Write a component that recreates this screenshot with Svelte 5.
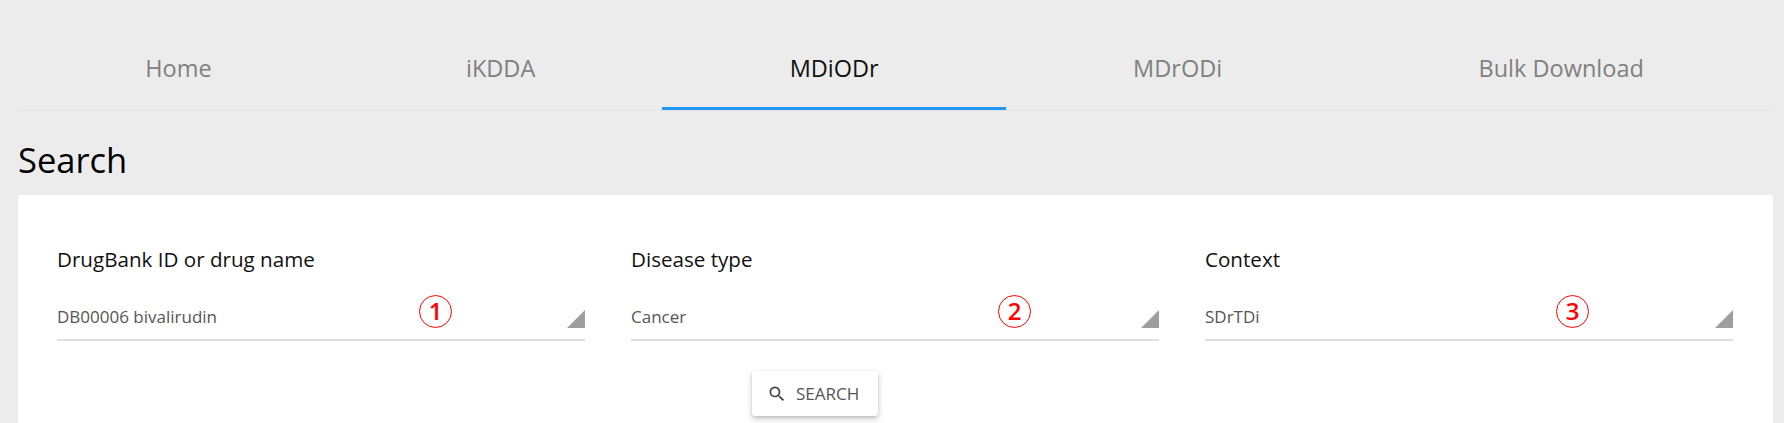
<script>
  const tabs = ['Home', 'iKDDA', 'MDiODr', 'MDrODi', 'Bulk Download'];
  const fields = [
    { label: 'DrugBank ID or drug name', value: 'DB00006 bivalirudin', mark: 1, left: 362 },
    { label: 'Disease type', value: 'Cancer', mark: 2, left: 367 },
    { label: 'Context', value: 'SDrTDi', mark: 3, left: 351 }
  ];
</script>

<div class="page">
  <nav class="tabs">
    {#each tabs as tab, i}
      <div class="tab" class:active={i === 2}>{tab}</div>
    {/each}
  </nav>

  <h1 class="title">Search</h1>

  <section class="card">
    <div class="fields">
      {#each fields as f}
        <div class="field">
          <div class="field__label">{f.label}</div>
          <div class="field__input">
            <span class="field__value">{f.value}</span>
            <span class="field__corner"></span>
            <span class="mark" style="left: {f.left}px">{f.mark}</span>
          </div>
        </div>
      {/each}
    </div>
    <div class="actions">
      <button class="btn">
        <svg width="20" height="20" viewBox="0 0 24 24" aria-hidden="true">
          <path fill="#444" d="M15.5 14h-.79l-.28-.27A6.47 6.47 0 0 0 16 9.5 6.5 6.5 0 1 0 9.5 16c1.61 0 3.09-.59 4.23-1.57l.27.28v.79l5 4.99L20.49 19l-4.99-5zm-6 0C7.01 14 5 11.99 5 9.5S7.01 5 9.5 5 14 7.01 14 9.5 11.99 14 9.5 14z"/>
        </svg>
        SEARCH
      </button>
    </div>
  </section>
</div>

<style>
  :global(body) {
    background: #ececec;
    font-family: "Open Sans", "Noto Sans", sans-serif;
  }

  .page {
    height: 423px;
    box-sizing: border-box;
    padding: 0 11px 0 18px;
    overflow: hidden;
  }

  .tabs {
    display: flex;
    padding-top: 28px;
    border-bottom: 1px solid #e6e6e6;
    height: 82px;
  }

  .tab {
    flex: 1 1 auto;
    display: flex;
    align-items: center;
    justify-content: center;
    height: 82px;
    box-sizing: border-box;
    font-size: 23.5px;
    color: #808080;
    border-bottom: 3px solid transparent;
  }

  .tab:last-child {
    padding: 0 2px;
  }

  .tab.active {
    color: #111;
    border-bottom-color: #2196f3;
  }

  .title {
    margin: 0;
    padding-top: 26px;
    height: 84px;
    box-sizing: border-box;
    font-size: 34.5px;
    font-weight: 400;
    line-height: 46px;
    color: #000;
  }

  .card {
    background: #fff;
    height: 260px;
    padding: 0 40px 0 39px;
  }

  .fields {
    display: grid;
    grid-template-columns: repeat(3, 1fr);
    column-gap: 46px;
    padding-top: 50px;
  }

  .field__label {
    font-size: 20.6px;
    line-height: 28px;
    color: #111;
  }

  .field__input {
    position: relative;
    height: 62px;
    margin-top: 6px;
    box-sizing: border-box;
    border-bottom: 2px solid #e0e0e0;
  }

  .field__value {
    position: absolute;
    left: 0;
    top: 26px;
    font-size: 17px;
    line-height: 24px;
    color: #555;
  }

  .field__corner {
    position: absolute;
    right: 0;
    bottom: 11px;
    width: 18px;
    height: 18px;
    background: #9e9e9e;
    clip-path: polygon(100% 0, 100% 100%, 0 100%);
  }

  .mark {
    position: absolute;
    top: 16px;
    width: 33px;
    height: 33px;
    box-sizing: border-box;
    border: 1px solid #f00;
    border-radius: 50%;
    color: #f00;
    font-size: 24px;
    font-weight: 600;
    line-height: 30px;
    text-align: center;
  }

  .actions {
    display: flex;
    margin-top: 30px;
    padding-left: 695px;
  }

  .btn {
    display: flex;
    align-items: center;
    gap: 9px;
    width: 126px;
    height: 45px;
    padding: 0 0 0 15px;
    box-sizing: border-box;
    border: 0;
    border-radius: 3px;
    background: #fff;
    box-shadow: 0 3px 6px rgba(0, 0, 0, .2), 0 1px 3px rgba(0, 0, 0, .12);
    font-family: inherit;
    font-size: 17px;
    color: #555;
  }
</style>
